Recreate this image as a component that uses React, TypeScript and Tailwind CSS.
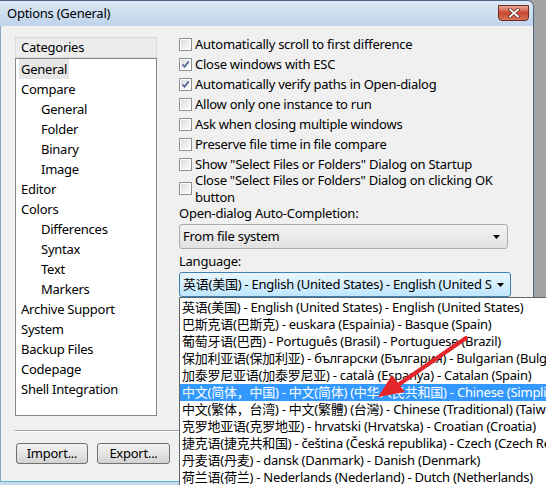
import React from "react";

const FONT = { fontFamily: '"Noto Sans", "Noto Sans CJK SC", sans-serif', letterSpacing: "-0.25px" };

const tree: [string, number][] = [
  ["General", 0],
  ["Compare", 0],
  ["General", 1],
  ["Folder", 1],
  ["Binary", 1],
  ["Image", 1],
  ["Editor", 0],
  ["Colors", 0],
  ["Differences", 1],
  ["Syntax", 1],
  ["Text", 1],
  ["Markers", 1],
  ["Archive Support", 0],
  ["System", 0],
  ["Backup Files", 0],
  ["Codepage", 0],
  ["Shell Integration", 0],
];

const checks: [string, boolean][] = [
  ["Automatically scroll to first difference", false],
  ["Close windows with ESC", true],
  ["Automatically verify paths in Open-dialog", true],
  ["Allow only one instance to run", false],
  ["Ask when closing multiple windows", false],
  ["Preserve file time in file compare", false],
  ['Show "Select Files or Folders" Dialog on Startup', false],
];

const langs = [
  "英语(美国) - English (United States) - English (United States)",
  "巴斯克语(巴斯克) - euskara (Espainia) - Basque (Spain)",
  "葡萄牙语(巴西) - Português (Brasil) - Portuguese (Brazil)",
  "保加利亚语(保加利亚) - български (България) - Bulgarian (Bulgaria)",
  "加泰罗尼亚语(加泰罗尼亚) - català (Espanya) - Catalan (Spain)",
  "中文(简体，中国) - 中文(简体) (中华人民共和国) - Chinese (Simplified) (PRC)",
  "中文(繁体，台湾) - 中文(繁體) (台灣) - Chinese (Traditional) (Taiwan)",
  "克罗地亚语(克罗地亚) - hrvatski (Hrvatska) - Croatian (Croatia)",
  "捷克语(捷克共和国) - čeština (Česká republika) - Czech (Czech Republic)",
  "丹麦语(丹麦) - dansk (Danmark) - Danish (Denmark)",
  "荷兰语(荷兰) - Nederlands (Nederland) - Dutch (Netherlands)",
];

function CheckBox({ checked }: { checked: boolean }) {
  return (
    <div className="w-[13px] h-[13px] shrink-0 border border-[#8e8f8f] bg-white p-[1px]">
      <div className="w-full h-full bg-gradient-to-br from-[#dedede] to-[#fbfbfb] relative">
        {checked && (
          <svg viewBox="0 0 9 9" className="absolute inset-0 w-full h-full">
            <path d="M1.5 4.5 L3.6 6.8 L7.6 1.6" stroke="#4a5f97" strokeWidth="1.7" fill="none" />
          </svg>
        )}
      </div>
    </div>
  );
}

function Caret() {
  return (
    <svg width="7" height="4" viewBox="0 0 7 4" className="shrink-0">
      <path d="M0 0 H7 L3.5 4 Z" fill="#000" />
    </svg>
  );
}

export default function App() {
  return (
    <div className="w-[546px] h-[485px] relative overflow-hidden bg-[#a3a3a3] flex text-[13px] text-black" style={FONT}>
      {/* window */}
      <div className="w-[534px] h-[485px] flex flex-col rounded-tr-[7px] overflow-hidden border-t border-r border-[#4b6583] bg-[#c9daec]">
        {/* title bar */}
        <div className="h-[25px] shrink-0 flex items-start bg-gradient-to-b from-[#dbe7f5] to-[#bfd3ea] pl-[7px] pr-[4px]">
          <div className="mt-[4px] text-[13px] leading-[17px] text-black flex-1">Options (General)</div>
          <div className="mt-[4px] w-[31px] h-[16px] rounded-b-[4px] border border-[#6b2a22] bg-gradient-to-b from-[#e9a99a] via-[#c9452f] to-[#d8735b] flex items-center justify-center">
            <svg width="12" height="10" viewBox="0 0 12 10">
              <path d="M2 1.5 L10 8.5 M10 1.5 L2 8.5" stroke="#5a2a22" strokeWidth="3.2" strokeLinecap="square" />
              <path d="M2 1.5 L10 8.5 M10 1.5 L2 8.5" stroke="#ffffff" strokeWidth="1.8" strokeLinecap="square" />
            </svg>
          </div>
        </div>
        {/* client */}
        <div className="flex-1 flex bg-[#f0f0f0] border-l border-[#8fa7c2] mb-[3px] border-b border-b-[#5fb6d8]">
          {/* left column */}
          <div className="w-[178px] shrink-0 flex flex-col pl-[14px] pt-[11px]">
            <div className="w-[142px] h-[21px] border border-[#d9d9d9] bg-[#ececec] pl-[5px] leading-[19px]">Categories</div>
            <div className="w-[142px] h-[358px] border border-[#828790] bg-white pl-[3px]">
              {tree.map(([t, lvl], i) => (
                <div key={i} className="h-[20px] leading-[20px]" style={{ paddingLeft: lvl ? 20 : 0 }}>
                  <span className={i === 0 ? "bg-[#e6e6e6] px-[2px] inline-block" : "px-[2px] inline-block"}>{t}</span>
                </div>
              ))}
            </div>
            <div className="mt-[14px] h-[2px] border-t border-[#a0a0a0] border-b border-b-white w-[200px]" />
            <div className="mt-[11px] flex gap-[9px] pl-[1px]">
              <button className="w-[72px] h-[21px] rounded-[3px] border border-[#707070] bg-gradient-to-b from-[#f3f3f3] via-[#e5e5e5] to-[#d2d2d2] text-[13px] leading-[17px]">Import...</button>
              <button className="w-[73px] h-[21px] rounded-[3px] border border-[#707070] bg-gradient-to-b from-[#f3f3f3] via-[#e5e5e5] to-[#d2d2d2] text-[13px] leading-[17px]">Export...</button>
            </div>
          </div>
          {/* right column */}
          <div className="flex-1 flex flex-col pt-[8px]">
            {checks.map(([t, c], i) => (
              <div key={i} className="h-[20px] flex items-center gap-[3px] whitespace-nowrap">
                <CheckBox checked={c} />
                <span className="leading-[17px]">{t}</span>
              </div>
            ))}
            <div className="-mt-[2px] h-[33px] flex items-center gap-[3px]">
              <CheckBox checked={false} />
              <span className="leading-[17px]">
                Close "Select Files or Folders" Dialog on clicking OK
                <br />
                button
              </span>
            </div>
            <div className="h-[16px] leading-[16px]">Open-dialog Auto-Completion:</div>
            <div className="mt-[3px] w-[329px] h-[25px] rounded-[3px] border border-[#acacac] bg-gradient-to-b from-[#f2f2f2] to-[#e2e2e2] flex items-center pl-[3px] pr-[7px]">
              <span className="flex-1">From file system</span>
              <Caret />
            </div>
            <div className="mt-[4px] h-[16px] leading-[16px]">Language:</div>
            <div className="mt-[3px] w-[332px] h-[25px] rounded-[3px] border border-[#3c7fb1] bg-gradient-to-b from-[#eaf6fd] to-[#bee6fd] flex items-center pl-[3px] pr-[6px]">
              <span className="flex-1 overflow-hidden whitespace-nowrap">英语(美国) - English (United States) - English (United States)</span>
              <span className="w-[5px]" />
              <Caret />
            </div>
          </div>
        </div>
      </div>
      {/* gray strip */}
      <div className="flex-1" />

      {/* dropdown list */}
      <div className="absolute left-[179px] top-[297px] w-[400px] h-[200px] bg-white border border-[#646464] pt-[1px]">
        {langs.map((l, i) => (
          <div
            key={i}
            className={
              "h-[17px] leading-[17px] pl-[2px] whitespace-nowrap " +
              (i === 5 ? "bg-[#3399ff] text-white" : "")
            }
          >
            {l}
          </div>
        ))}
      </div>

      {/* red arrow */}
      <svg className="absolute left-0 top-0 pointer-events-none" width="546" height="485">
        <line x1="466" y1="338" x2="398" y2="385" stroke="#e3262a" strokeWidth="4" strokeLinecap="round" />
        <path d="M378 397 L392 375 L405 392 Z" fill="#e3262a" />
      </svg>
    </div>
  );
}
